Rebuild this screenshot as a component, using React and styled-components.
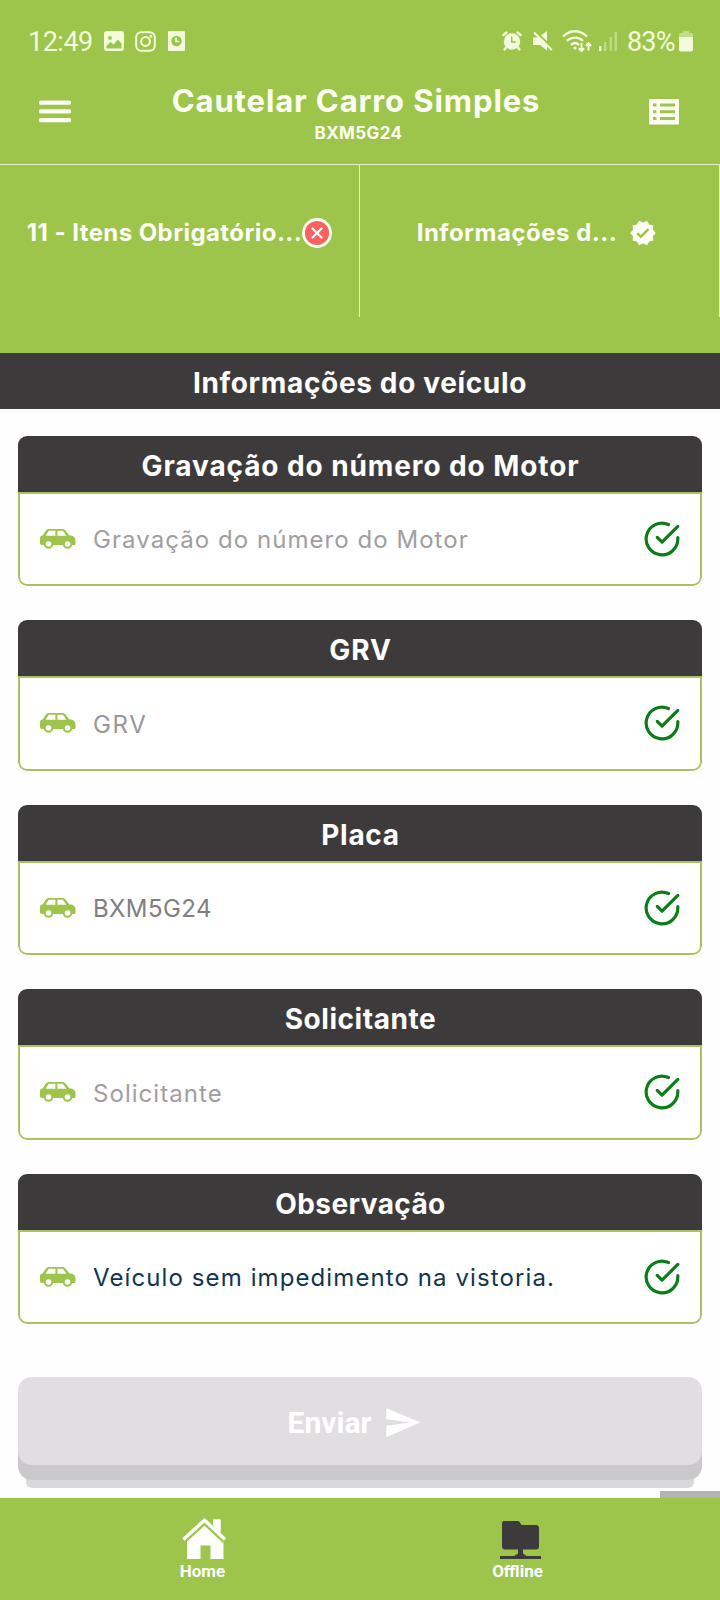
import React from "react";
import styled, { createGlobalStyle } from "styled-components";
import { MdSend, MdVerified } from "react-icons/md";

const GREEN = "#9dc54c";
const DARK = "#3d3a3c";

const GlobalStyle = createGlobalStyle`
  * {
    box-sizing: border-box;
  }

  body {
    margin: 0;
    background: #fefefe;
    font-family: Inter, "Liberation Sans", sans-serif;
  }

  svg {
    display: block;
    flex-shrink: 0;
  }
`;

const Screen = styled.div`
  display: flex;
  flex-direction: column;
  width: 720px;
  height: 1600px;
  overflow: hidden;
  background: #fefefe;
`;

const TopArea = styled.div`
  height: 353px;
  background: ${GREEN};
  color: #fdfff5;
`;

const StatusBar = styled.div`
  display: flex;
  justify-content: space-between;
  height: 82px;
  padding: 0 27px 0 28px;
  color: #f3fbdc;
  font-family: Roboto, sans-serif;
  font-size: 27px;
`;

const StatusGroup = styled.div`
  display: flex;
  align-items: center;
`;

const Clock = styled.span`
  width: 76px;
  padding-top: 1px;
  letter-spacing: -0.5px;
`;

const Battery = styled.span`
  width: 52px;
  margin-left: 9px;
  padding-top: 1px;
  letter-spacing: -0.8px;
`;

const StatusIcon = styled.svg`
  margin-left: ${({ $left }) => $left || 0}px;
`;

const Header = styled.header`
  display: flex;
  justify-content: space-between;
  height: 82px;
  padding: 0 41px 0 39px;
`;

const MenuButton = styled.button`
  display: flex;
  padding: ${({ $top }) => $top}px 0 0;
  border: 0;
  background: none;
  color: inherit;
`;

const Titles = styled.div`
  display: flex;
  flex-direction: column;
  align-items: center;
  padding: 1px 3px 0 0;
`;

const Title = styled.h1`
  margin: 0;
  padding-right: 5px;
  font-size: 31px;
  font-weight: 700;
  line-height: 36px;
  letter-spacing: 0.9px;
`;

const Plate = styled.span`
  font-size: 17px;
  font-weight: 700;
  line-height: 24px;
  padding-top: 2px;
  letter-spacing: 0.4px;
`;

const Tabs = styled.nav`
  display: grid;
  grid-template-columns: 1fr 1fr;
  height: 153px;
  border-top: 1px solid #e2efc0;
`;

const Tab = styled.div`
  display: flex;
  align-items: center;
  justify-content: center;
  gap: ${({ $gap }) => $gap}px;
  padding: 0 ${({ $right }) => $right}px 17px 0;
  border-right: 1px solid #e2efc0;
  font-size: 24px;
  font-weight: 700;
  letter-spacing: ${({ $spacing }) => $spacing}px;
  white-space: nowrap;
`;

const SectionTitle = styled.h2`
  flex: none;
  height: 56px;
  margin: 0;
  background: ${DARK};
  color: #fff;
  font-size: 28px;
  font-weight: 700;
  line-height: 60px;
  text-align: center;
  letter-spacing: 0.65px;
`;

const Form = styled.main`
  display: flex;
  flex-direction: column;
  height: 1089px;
  gap: 34px;
  padding: 26.5px 18px 0;
`;

const Card = styled.section`
  flex: none;
  height: 150.5px;
  border-radius: 9px;
  overflow: hidden;
  background: #fff;
`;

const CardTitle = styled.h3`
  height: 56px;
  margin: 0;
  padding-left: 1px;
  background: ${DARK};
  color: #fff;
  font-size: 28px;
  font-weight: 700;
  line-height: 60px;
  text-align: center;
  letter-spacing: ${({ $spacing }) => $spacing}px;
`;

const Field = styled.div`
  display: flex;
  align-items: center;
  height: 94.5px;
  padding: 0 19.5px 0 20px;
  border: 2px solid #a9c163;
  border-radius: 0 0 9px 9px;
  color: ${GREEN};
`;

const Value = styled.span`
  flex: 1;
  padding: 2px 0 0 17px;
  color: ${({ $color }) => $color};
  font-size: 24px;
  letter-spacing: ${({ $spacing }) => $spacing}px;
`;

const SendButton = styled.button`
  display: flex;
  flex: none;
  align-items: center;
  justify-content: center;
  gap: 12px;
  height: 88px;
  margin-top: 19px;
  padding: 2px 10px 0 0;
  border: 0;
  border-radius: 14px;
  background: #e0dee1;
  box-shadow: 0 15px 0 #cac8cb, 0 31px 0 -8px #d9d8da;
  color: #fff;
  font-family: Roboto, sans-serif;
  font-size: 30px;
  font-weight: 700;
`;

const ScrollThumb = styled.div`
  position: absolute;
  right: 0;
  top: -7px;
  width: 60px;
  height: 7px;
  background: #b5b4b5;
`;

const BottomNav = styled.footer`
  position: relative;
  display: grid;
  grid-template-columns: 315px 315px;
  height: 102px;
  padding: 20px 0 0 45px;
  background: ${GREEN};
`;

const NavItem = styled.div`
  display: flex;
  flex-direction: column;
  align-items: center;
  color: #fff;
  font-family: Roboto, sans-serif;
  font-size: 17px;
  font-weight: 700;
  line-height: 22px;
`;

const NavIcon = styled.svg`
  margin-left: ${({ $left }) => $left}px;
`;

const ImageIcon = () => (
  <StatusIcon width="20" height="20" viewBox="0 0 20 20">
    <path
      fill="currentColor"
      fillRule="evenodd"
      d="M3 0h14a3 3 0 0 1 3 3v14a3 3 0 0 1-3 3H3a3 3 0 0 1-3-3V3a3 3 0 0 1 3-3zM6 5a1.9 1.9 0 1 0 0 3.8A1.9 1.9 0 0 0 6 5zM2.5 17.5h15v-5L14 8.500l-4.500 5-3-2.500-4 4z"
    />
  </StatusIcon>
);

const InstagramIcon = () => (
  <StatusIcon $left={11} width="21" height="21" viewBox="0 0 21 21" fill="none" stroke="currentColor" strokeWidth="2">
    <rect x="1.200" y="1.200" width="18.600" height="18.600" rx="5" />
    <circle cx="10.500" cy="10.500" r="4.400" />
    <circle cx="15.800" cy="5.200" r="0.500" />
  </StatusIcon>
);

const ClockFileIcon = () => (
  <StatusIcon $left={12} width="17" height="20" viewBox="0 0 17 20">
    <rect width="17" height="20" rx="1" fill="currentColor" />
    <circle cx="8.500" cy="10" r="5.200" fill={GREEN} />
    <path d="M8 6.500V10.500h3" fill="none" stroke="currentColor" strokeWidth="1.600" />
  </StatusIcon>
);

const AlarmIcon = () => (
  <StatusIcon width="20" height="20" viewBox="0 0 20 20" fill="none" stroke="currentColor" strokeWidth="2.400" strokeLinecap="round">
    <circle cx="10" cy="10.500" r="8.200" fill="currentColor" stroke="none" />
    <path d="M1.500 4l3-2.500M18.500 4l-3-2.500M4 16.500l-1.500 2M16 16.500l1.500 2" />
    <path d="M9.700 6v5h3.800" stroke={GREEN} strokeWidth="1.500" />
  </StatusIcon>
);

const MuteIcon = () => (
  <StatusIcon $left={11} width="20" height="20" viewBox="0 0 20 20">
    <path d="M0 6.500h5L14 0v19.500L7 14H0z" fill="currentColor" />
    <path d="M2 0l18 17.500" stroke={GREEN} strokeWidth="2.200" />
    <path d="M1 1.500l17.800 17.500" stroke="currentColor" strokeWidth="2.200" />
  </StatusIcon>
);

const WifiIcon = () => (
  <StatusIcon $left={9} width="31" height="24" viewBox="0 0 31 24" fill="none" stroke="currentColor" strokeWidth="2.300">
    <path d="M1 7.500C8 .5 18 .5 25 7.500M5 12c4.500-4.500 11.500-4.500 16 0M9 16c2.500-2.500 5.500-2.500 8 0" />
    <circle cx="13" cy="19" r="1.600" fill="currentColor" stroke="none" />
    <path d="M19.500 14v8M16.800 19.200l2.700 2.800 2.700-2.800M26.500 21.500v-7M23.800 17l2.700-2.800 2.700 2.800" strokeWidth="2" />
  </StatusIcon>
);

const SignalIcon = () => (
  <StatusIcon $left={5} width="20" height="20" viewBox="0 0 20 20" fill="currentColor">
    <rect x="1" y="15" width="2.500" height="5" />
    <g opacity="0.400">
      <rect x="6" y="11" width="2.500" height="9" />
      <rect x="11.500" y="6" width="2.500" height="14" />
      <rect x="16.500" y="1" width="2.500" height="19" />
    </g>
  </StatusIcon>
);

const BatteryIcon = () => (
  <StatusIcon width="14" height="21" viewBox="0 0 15 21" preserveAspectRatio="none" fill="currentColor">
    <path d="M4.500 0h6v2H13a2 2 0 0 1 2 2v3H0V4a2 2 0 0 1 2-2h2.500z" opacity="0.450" />
    <path d="M0 6h15v12.500a2 2 0 0 1-2 2H2a2 2 0 0 1-2-2z" />
  </StatusIcon>
);

const MenuIcon = () => (
  <svg width="32" height="24" viewBox="0 0 32 24" fill="currentColor">
    <rect y="0.500" width="32" height="4.300" rx="1.500" />
    <rect y="9.300" width="32" height="4.300" rx="1.500" />
    <rect y="18" width="32" height="4.300" rx="1.500" />
  </svg>
);

const ListIcon = () => (
  <svg width="30" height="26" viewBox="0 0 30 26">
    <rect width="30" height="25.500" rx="1" fill="currentColor" />
    <path
      d="M4 4.500h3.500v3H4zM11 4.500h15v3H11zM4 11.200h3.500v3H4zM11 11.200h15v3H11zM4 18h3.500v3H4zM11 18h15v3H11z"
      fill={GREEN}
    />
  </svg>
);

const ErrorIcon = () => (
  <svg width="30" height="30" viewBox="0 0 30 30">
    <circle cx="15" cy="15" r="13.500" fill="#fa6260" stroke="#fdfff5" strokeWidth="2.800" />
    <path d="M10.500 10.500l9 9M19.500 10.500l-9 9" stroke="#fff" strokeWidth="2.200" strokeLinecap="round" />
  </svg>
);

const CarIcon = () => (
  <svg width="36" height="20" viewBox="0 0 36 20">
    <path
      fill="currentColor"
      fillRule="evenodd"
      d="M9 0h13.500c1.300 0 2.200.5 3 1.500l4 5h2c2.500.5 4 2.500 4 5v3c0 1-.5 1.500-1.500 1.500H2c-1.300 0-2-.7-2-2V9c0-1.500 1-2.200 2.500-2.500L6 1.500C6.800.5 7.700 0 9 0zM8.700 1.800L5.600 6.800h9.800v-5zM17.400 1.800v5h9L22.800 1.800z"
    />
    <circle cx="8.500" cy="15" r="3.800" fill="#fff" stroke="currentColor" strokeWidth="2" />
    <circle cx="27.500" cy="15" r="3.800" fill="#fff" stroke="currentColor" strokeWidth="2" />
  </svg>
);

const CheckIcon = () => (
  <svg
    width="38"
    height="38"
    viewBox="0 0 24 24"
    fill="none"
    stroke="#0b7d16"
    strokeWidth="2"
    strokeLinecap="round"
    strokeLinejoin="round"
  >
    <path d="M22 11.080V12a10 10 0 1 1-5.930-9.140" />
    <path d="M22 4L12 14.010l-3-3" />
  </svg>
);

const HomeIcon = () => (
  <NavIcon $left={2} width="44" height="42" viewBox="0 0 44 42">
    <path d="M31 1.500h7.500V17L31 9.500z" fill="#fff" />
    <path d="M5 21L23 4.500 41.500 21v20H28.500V27.500h-10V41H5z" fill="#fff" />
    <path d="M1 22.500L22.500 3 43.500 22.500" fill="none" stroke={GREEN} strokeWidth="7" />
    <path d="M31.500 1.500h7V15l-7-6z" fill="#fff" />
    <path d="M1.300 21.500L22.500 2.200 43 21.500" fill="none" stroke="#fff" strokeWidth="3.400" />
  </NavIcon>
);

const OfflineIcon = () => (
  <NavIcon $left={4} width="42" height="42" viewBox="0 0 42 42" fill={DARK}>
    <path d="M5 3h13.500c1 0 1.700.5 2.300 1.300L22.500 7H37a3 3 0 0 1 3 3v18.500a3 3 0 0 1-3 3H6a3 3 0 0 1-3-3V5a2 2 0 0 1 2-2z" />
    <path d="M19 31h5v4.500l3.500 2.500H42v3H1v-3h14l4-2.500z" />
  </NavIcon>
);

const fields = [
  { label: "Gravação do número do Motor", value: "Gravação do número do Motor", color: "#a09ea0", titleSpacing: 0.9, spacing: 1.05 },
  { label: "GRV", value: "GRV", color: "#989698", titleSpacing: 0.9, spacing: 1.6 },
  { label: "Placa", value: "BXM5G24", color: "#807e80", titleSpacing: 0.7, spacing: 0.4 },
  { label: "Solicitante", value: "Solicitante", color: "#a09ea0", titleSpacing: 0.55, spacing: 1.05 },
  { label: "Observação", value: "Veículo sem impedimento na vistoria.", color: "#12344f", titleSpacing: 0.4, spacing: 1.1 },
];

function App() {
  return (
    <Screen>
      <GlobalStyle />
      <TopArea>
        <StatusBar>
          <StatusGroup>
            <Clock>12:49</Clock>
            <ImageIcon />
            <InstagramIcon />
            <ClockFileIcon />
          </StatusGroup>
          <StatusGroup>
            <AlarmIcon />
            <MuteIcon />
            <WifiIcon />
            <SignalIcon />
            <Battery>83%</Battery>
            <BatteryIcon />
          </StatusGroup>
        </StatusBar>
        <Header>
          <MenuButton $top={18} aria-label="Menu">
            <MenuIcon />
          </MenuButton>
          <Titles>
            <Title>Cautelar Carro Simples</Title>
            <Plate>BXM5G24</Plate>
          </Titles>
          <MenuButton $top={17} aria-label="Lista">
            <ListIcon />
          </MenuButton>
        </Header>
        <Tabs>
          <Tab $gap={0} $right={0} $spacing={0.42}>
            11 - Itens Obrigatório...
            <ErrorIcon />
          </Tab>
          <Tab $gap={12} $right={5} $spacing={0.5}>
            Informações d...
            <MdVerified size={28} />
          </Tab>
        </Tabs>
      </TopArea>
      <SectionTitle>Informações do veículo</SectionTitle>
      <Form>
        {fields.map((field) => (
          <Card key={field.label}>
            <CardTitle $spacing={field.titleSpacing}>{field.label}</CardTitle>
            <Field>
              <CarIcon />
              <Value $color={field.color} $spacing={field.spacing}>
                {field.value}
              </Value>
              <CheckIcon />
            </Field>
          </Card>
        ))}
        <SendButton>
          Enviar
          <MdSend size={39} />
        </SendButton>
      </Form>
      <BottomNav>
        <ScrollThumb />
        <NavItem>
          <HomeIcon />
          Home
        </NavItem>
        <NavItem>
          <OfflineIcon />
          Offline
        </NavItem>
      </BottomNav>
    </Screen>
  );
}

export default App;
